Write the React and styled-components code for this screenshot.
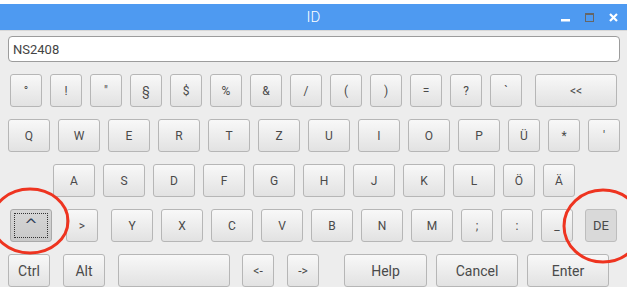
import styled, { createGlobalStyle, css } from 'styled-components';

const GlobalStyle = createGlobalStyle`
  html, body {
    margin: 0;
    padding: 0;
    background: #ffffff;
  }
  body {
    font-family: Roboto, "Liberation Sans", sans-serif;
  }
`;

const Stage = styled.div`
  position: relative;
  width: 627px;
  height: 293px;
  padding-top: 4px;
  box-sizing: border-box;
  overflow: hidden;
`;

const TitleBar = styled.div`
  height: 26px;
  background: #4e9af1;
  display: grid;
  grid-template-columns: 1fr auto 1fr;
  align-items: center;
`;

const Title = styled.div`
  grid-column: 2;
  color: #ffffff;
  font-size: 15px;
  font-weight: 300;
  letter-spacing: 0.2px;
`;

const Controls = styled.div`
  grid-column: 3;
  justify-self: end;
  display: flex;
  align-items: center;
  gap: 15px;
  padding-right: 9px;
  height: 100%;
`;

const Body = styled.div`
  background: #ededed;
  border-top: 1px solid #d8d8d8;
  padding: 5px 7px 1px 8px;
  height: 257px;
  box-sizing: border-box;
`;

const Entry = styled.div`
  height: 26px;
  width: 612px;
  box-sizing: border-box;
  background: #ffffff;
  border: 1px solid #9c9c9c;
  border-radius: 4px;
  display: flex;
  align-items: center;
  padding-left: 4px;
  font-size: 13px;
  color: #444;
`;

const Rows = styled.div`
  margin-top: 12px;
  display: flex;
  flex-direction: column;
  gap: 12px;
`;

const Row = styled.div`
  display: flex;
  height: 33px;
`;

const Key = styled.div`
  box-sizing: border-box;
  width: ${(p) => p.$w}px;
  margin-left: ${(p) => p.$gap}px;
  height: 33px;
  border: 1px solid #b6b6b6;
  border-radius: 3px;
  background: linear-gradient(#f8f8f8, #e2e2e2);
  display: flex;
  align-items: center;
  justify-content: center;
  font-size: ${(p) => (p.$big ? 14 : 12)}px;
  color: #4a4a4a;
  white-space: nowrap;

  ${(p) =>
    p.$pressed &&
    css`
      background: linear-gradient(#d6d6d6, #c9c9c9);
      border-color: #a9a9a9;
      outline: 1px dotted #333;
      outline-offset: -5px;
    `}

  ${(p) =>
    p.$active &&
    css`
      background: #d9d9d9;
      border-color: #bdbdbd;
      font-size: 13px;
    `}
`;

const Caret = styled.span`
  font-family: "DejaVu Sans", sans-serif;
  font-size: 16px;
  color: #2f3f58;
  margin-top: -3px;
`;

const Marks = styled.svg`
  position: absolute;
  left: 0;
  top: 0;
  pointer-events: none;
`;

const k = (l, w, gap, extra = {}) => ({ l, w, gap, ...extra });
const narrow = (labels) => labels.map((l) => k(l, 32, 8));
const wide = (labels) => labels.map((l) => k(l, 42, 8));

const rows = [
  [
    k('°', 32, 2),
    ...narrow(['!', '"', '§', '$', '%', '&', '/', '(', ')', '=', '?', '`']),
    k('<<', 82, 13),
  ],
  [
    k('Q', 42, 0),
    ...wide(['W', 'E', 'R', 'T', 'Z', 'U', 'I', 'O', 'P']),
    ...narrow(['Ü', '*', "'"]),
  ],
  [
    k('A', 42, 45),
    ...wide(['S', 'D', 'F', 'G', 'H', 'J', 'K', 'L']),
    ...narrow(['Ö', 'Ä']),
  ],
  [
    k('^', 42, 2, { pressed: true }),
    k('>', 32, 14),
    k('Y', 42, 13),
    ...wide(['X', 'C', 'V', 'B', 'N', 'M']),
    ...narrow([';', ':', '_']),
    k('DE', 32, 12, { active: true }),
  ],
  [
    k('Ctrl', 42, 0, { big: true }),
    k('Alt', 42, 13, { big: true }),
    k('', 112, 13),
    k('<-', 32, 12),
    k('->', 32, 13),
    k('Help', 83, 25, { big: true }),
    k('Cancel', 82, 9, { big: true }),
    k('Enter', 82, 9, { big: true }),
  ],
];

export default function App() {
  return (
    <>
      <GlobalStyle />
      <Stage>
        <TitleBar>
          <Title>ID</Title>
          <Controls>
            <svg width="9" height="9" viewBox="0 0 9 9">
              <rect x="0" y="6" width="9" height="2.5" fill="#fff" />
            </svg>
            <svg width="9" height="9" viewBox="0 0 9 9">
              <rect x="0.5" y="0.5" width="8" height="8" fill="none" stroke="#666" strokeWidth="1" />
              <rect x="0" y="0" width="9" height="2" fill="#666" />
            </svg>
            <svg width="9" height="9" viewBox="0 0 9 9">
              <path d="M1 1 L8 8 M8 1 L1 8" stroke="#fff" strokeWidth="2.2" />
            </svg>
          </Controls>
        </TitleBar>
        <Body>
          <Entry>NS2408</Entry>
          <Rows>
            {rows.map((row, i) => (
              <Row key={i}>
                {row.map((key, j) => (
                  <Key
                    key={j}
                    $w={key.w}
                    $gap={key.gap}
                    $big={key.big}
                    $pressed={key.pressed}
                    $active={key.active}
                  >
                    {key.pressed ? <Caret>^</Caret> : key.l}
                  </Key>
                ))}
              </Row>
            ))}
          </Rows>
        </Body>
        <Marks width="627" height="293">
          <ellipse cx="30" cy="221" rx="38" ry="32" fill="none" stroke="#ee3420" strokeWidth="3" />
          <ellipse cx="603" cy="226" rx="39" ry="36" fill="none" stroke="#ee3420" strokeWidth="3" />
        </Marks>
      </Stage>
    </>
  );
}
